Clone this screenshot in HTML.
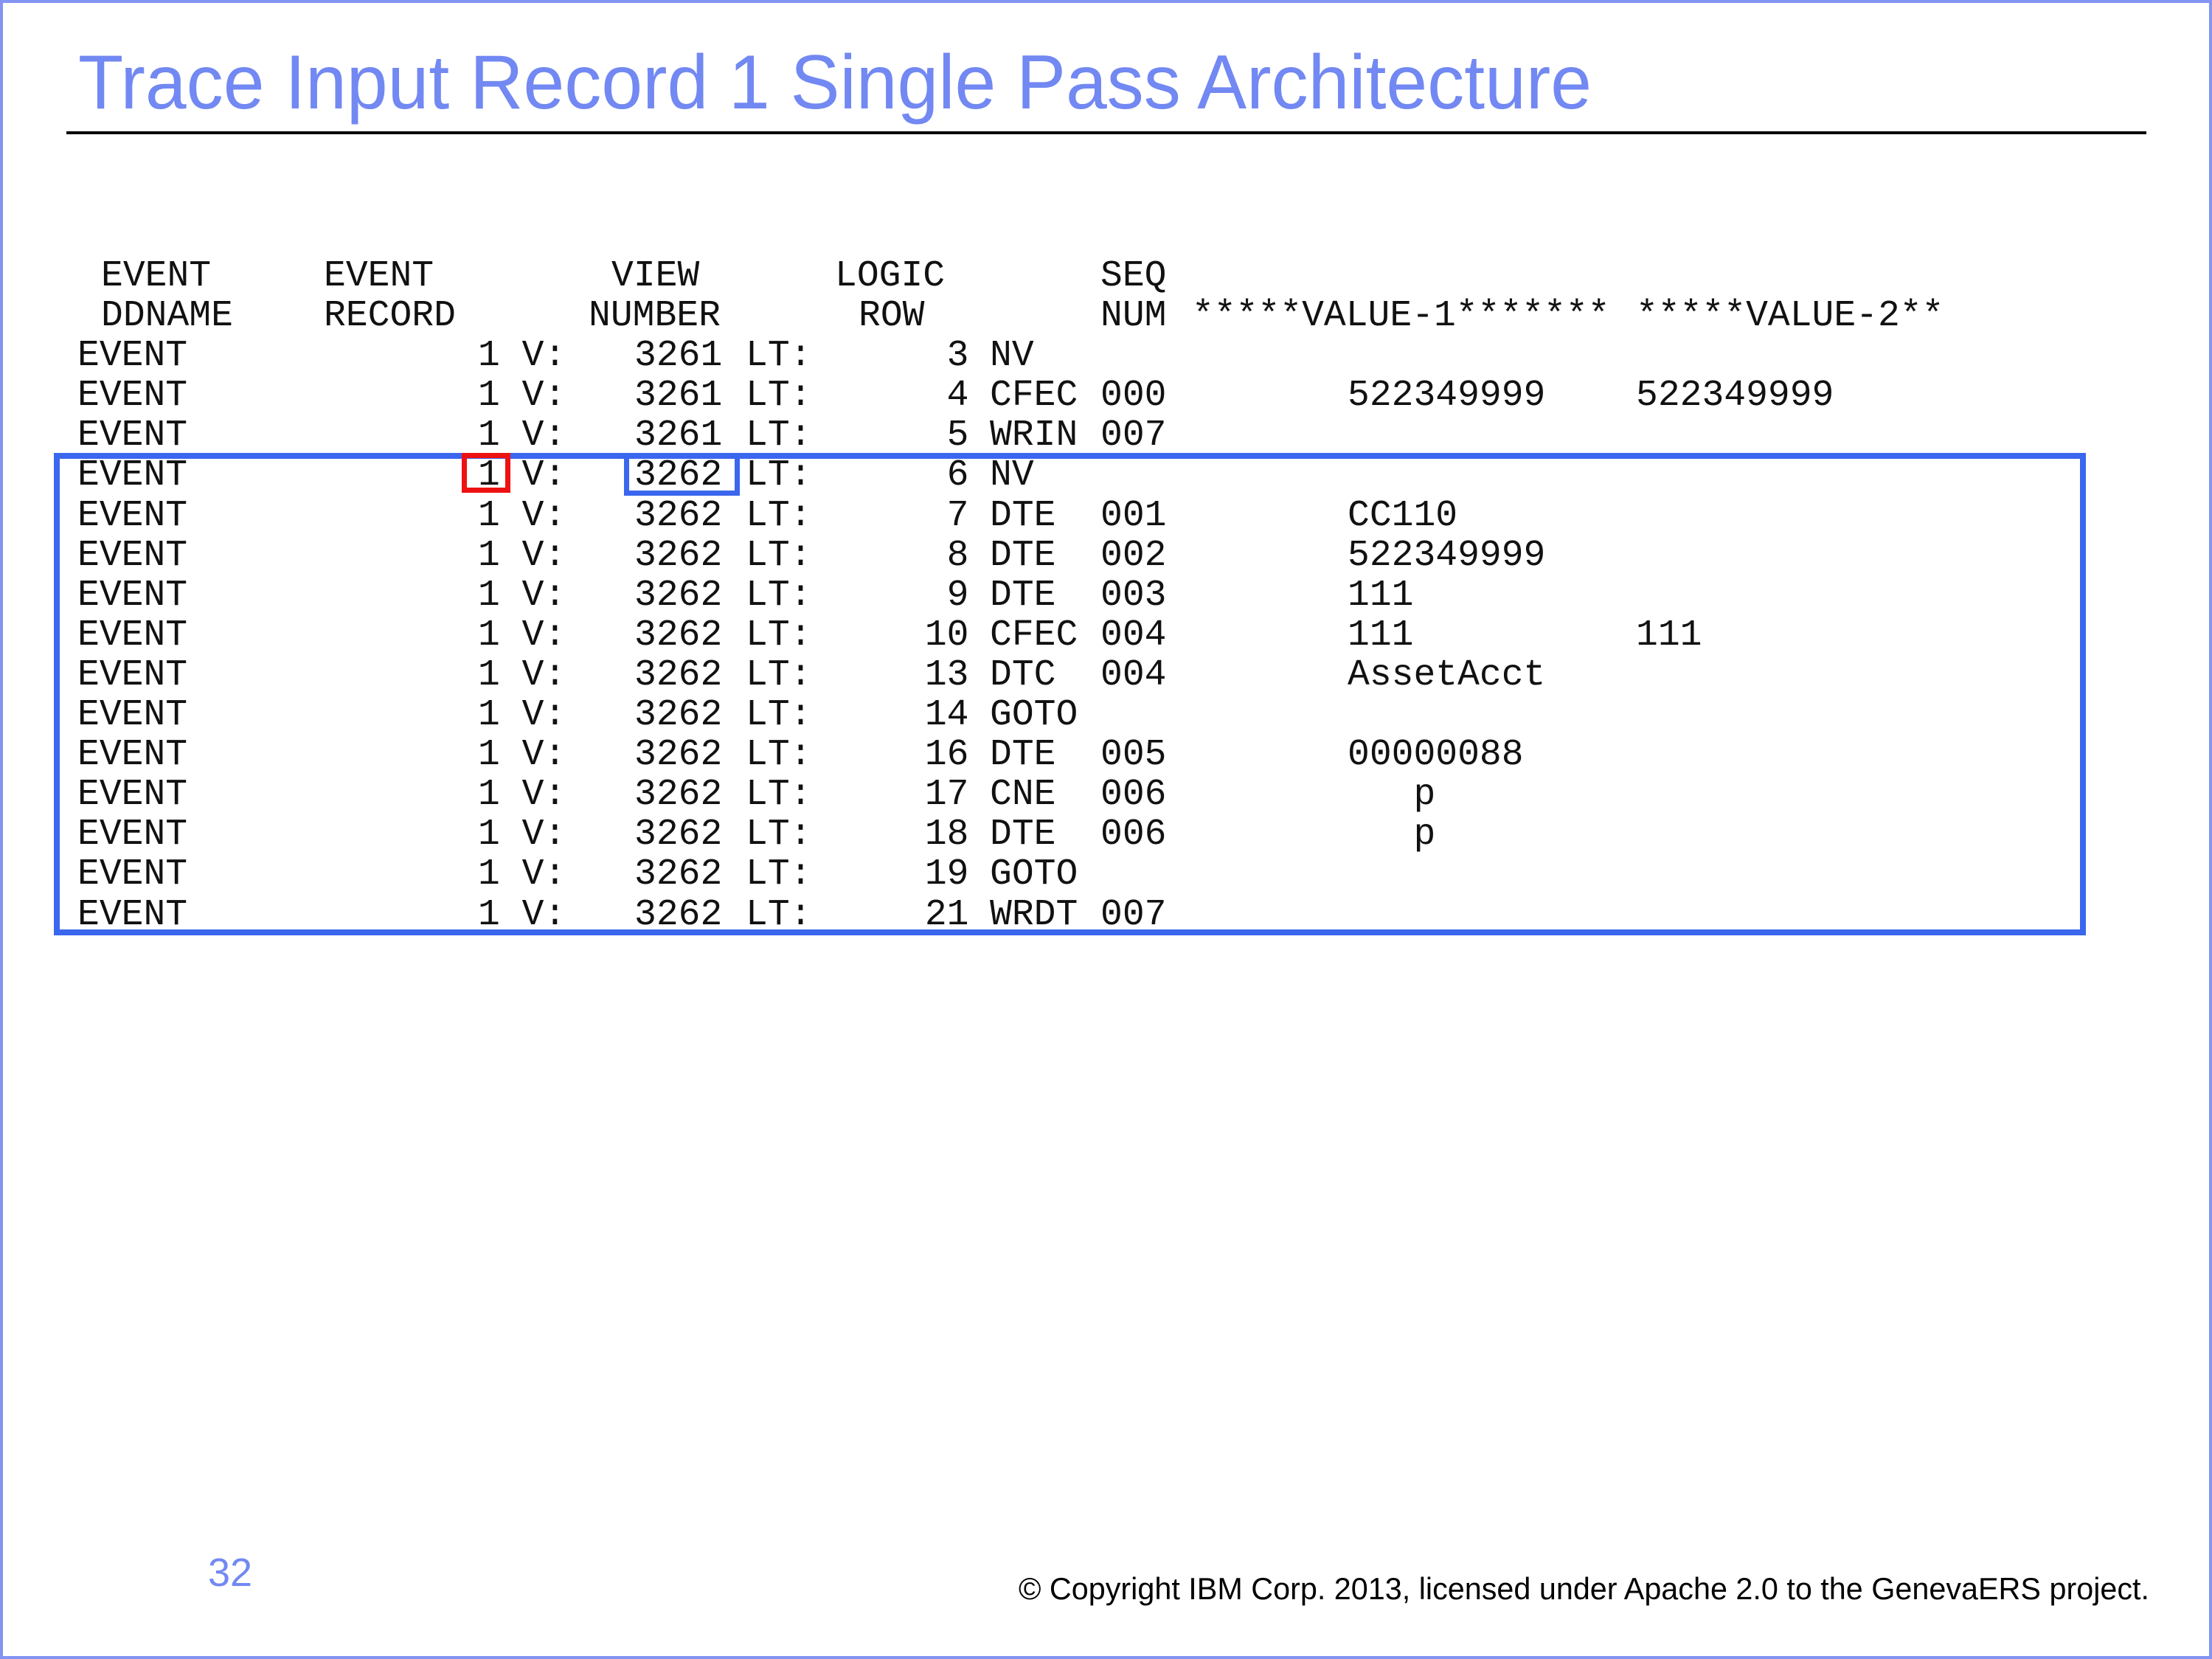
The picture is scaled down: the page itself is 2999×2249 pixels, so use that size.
<!DOCTYPE html>
<html><head><meta charset="utf-8"><style>
html,body{margin:0;padding:0;background:#fff}
body{width:2999px;height:2249px;position:relative;overflow:hidden}
.frame{position:absolute;left:0;top:0;width:2991px;height:2241px;border:4px solid #8394f2}
.c{position:absolute;top:347px;margin:0;font-family:"Liberation Mono","Courier New",monospace;font-size:49.7px;line-height:54.1px;color:#111;white-space:pre}
.box{position:absolute;box-sizing:border-box}
</style></head><body>
<div class="frame"></div>
<svg width="2999" height="2249" style="position:absolute;left:0;top:0">
<text x="106" y="147" font-family="Liberation Sans, Arial, sans-serif" font-size="104" fill="#7288f2" textLength="2052" lengthAdjust="spacingAndGlyphs">Trace Input Record 1 Single Pass Architecture</text>
<rect x="90" y="178" width="2820" height="4" fill="#000"/>
<text x="282" y="2150" font-family="Liberation Sans, Arial, sans-serif" font-size="54" fill="#7288f2">32</text>
<text x="1381" y="2168" font-family="Liberation Sans, Arial, sans-serif" font-size="42" fill="#000" textLength="1533" lengthAdjust="spacingAndGlyphs">© Copyright IBM Corp. 2013, licensed under Apache 2.0 to the GenevaERS project.</text>
</svg>
<div class="c" style="left:137px">EVENT
DDNAME</div>
<div class="c" style="left:439px">EVENT
RECORD</div>
<div class="c" style="left:829px">VIEW</div>
<div class="c" style="left:798px">
NUMBER</div>
<div class="c" style="left:1132px">LOGIC</div>
<div class="c" style="left:1164px">
ROW</div>
<div class="c" style="left:1492px">SEQ
NUM</div>
<div class="c" style="left:1616px">
*****VALUE-1*******</div>
<div class="c" style="left:2218px">
*****VALUE-2**</div>
<div class="c" style="left:105px">

EVENT
EVENT
EVENT
EVENT
EVENT
EVENT
EVENT
EVENT
EVENT
EVENT
EVENT
EVENT
EVENT
EVENT
EVENT</div>
<div class="c" style="left:648px">

1 V:
1 V:
1 V:
1 V:
1 V:
1 V:
1 V:
1 V:
1 V:
1 V:
1 V:
1 V:
1 V:
1 V:
1 V:</div>
<div class="c" style="left:860px">

3261
3261
3261
3262
3262
3262
3262
3262
3262
3262
3262
3262
3262
3262
3262</div>
<div class="c" style="left:1011px">

LT:
LT:
LT:
LT:
LT:
LT:
LT:
LT:
LT:
LT:
LT:
LT:
LT:
LT:
LT:</div>
<div class="c" style="left:1224px">

  3
  4
  5
  6
  7
  8
  9
 10
 13
 14
 16
 17
 18
 19
 21</div>
<div class="c" style="left:1342px">

NV
CFEC
WRIN
NV
DTE
DTE
DTE
CFEC
DTC
GOTO
DTE
CNE
DTE
GOTO
WRDT</div>
<div class="c" style="left:1492px">


000
007

001
002
003
004
004

005
006
006

007</div>
<div class="c" style="left:1827px">


522349999


CC110
522349999
111
111
AssetAcct

00000088
   p
   p</div>
<div class="c" style="left:2218px">


522349999





111</div>
<div class="box" style="left:73px;top:614px;width:2755px;height:654px;border:8px solid #3b66ee"></div>
<div class="box" style="left:626px;top:614px;width:66px;height:54px;border:7px solid #ee1111"></div>
<div class="box" style="left:846px;top:614px;width:157px;height:58px;border:7px solid #3b66ee"></div>
</body></html>
